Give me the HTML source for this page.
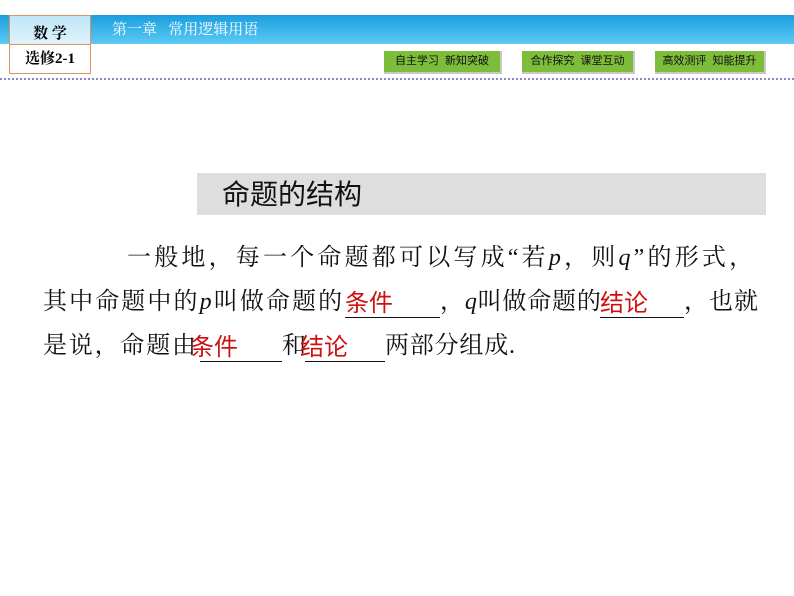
<!DOCTYPE html>
<html><head><meta charset="utf-8"><style>
body{margin:0;width:794px;height:596px;background:#fff;position:relative;overflow:hidden;font-family:"Liberation Serif","Noto Serif CJK SC",serif}
.a{position:absolute;white-space:nowrap}
.bar{left:0;top:15px;width:794px;height:29px;background:linear-gradient(#1a9ede,#5ccaf5)}
.box{left:9px;top:15px;width:80px;height:57px;border:1px solid #e0935a;background:#fff}
.box .t{position:absolute;left:0;top:0;width:80px;height:28px;background:linear-gradient(#bfe6f8,#dff3fc);border-bottom:1px solid #e0935a;text-align:center;font-size:15px;font-weight:bold;line-height:36px}
.box .b{position:absolute;left:0;top:29px;width:80px;height:28px;text-align:center;font-size:15px;font-weight:bold;line-height:28px}
.btn{top:51px;height:21px;background:#7dbd3a;border-right:2px solid #c8c8c8;border-bottom:2px solid #c8c8c8;font-family:"Liberation Sans","Noto Sans CJK SC",sans-serif;font-size:11px;line-height:21px;text-align:center;color:#111}
.dash{left:0;top:78px;width:794px;border-top:2px dotted #8a86c8}
.txt{font-size:24px;color:#111;line-height:30px}
.r{color:#d01010;font-family:"Liberation Sans","Noto Sans CJK SC",sans-serif;font-size:24px}
.u{border-bottom:1px solid #111;height:1px}
i{font-family:"Liberation Serif",serif}
</style></head><body>
<div class="a bar"></div>
<div class="a" style="left:112px;top:19px;font-size:15px;color:#fff;line-height:22px">第一章&nbsp;&nbsp;&nbsp;常用逻辑用语</div>
<div class="a box"><div class="t">数 学</div><div class="b">选修2-1</div></div>
<div class="a btn" style="left:384px;width:116px">自主学习&nbsp;&nbsp;新知突破</div>
<div class="a btn" style="left:522px;width:111px">合作探究&nbsp;&nbsp;课堂互动</div>
<div class="a btn" style="left:655px;width:109px">高效测评&nbsp;&nbsp;知能提升</div>
<div class="a dash"></div>
<div class="a" style="left:197px;top:173px;width:569px;height:42px;background:#dedede"></div>
<div class="a" style="left:222px;top:176px;font-size:28px;line-height:38px;font-family:'Liberation Sans','Noto Sans CJK SC',sans-serif;color:#111">命题的结构</div>
<div class="a txt" style="left:127px;top:243px;letter-spacing:3.2px">一般地，每一个命题都可以写成“若<i>p</i>，则<i>q</i>”的形式，</div>
<div class="a txt" style="left:43px;top:287px;letter-spacing:2.1px">其中命题中的<i>p</i>叫做命题的</div>
<div class="a u" style="left:345px;top:316px;width:95px"></div>
<div class="a r" style="left:345px;top:283px">条件</div>
<div class="a txt" style="left:440px;top:287px;letter-spacing:0.8px">，<i>q</i>叫做命题的</div>
<div class="a u" style="left:600px;top:316px;width:84px"></div>
<div class="a r" style="left:600px;top:283px">结论</div>
<div class="a txt" style="left:684px;top:287px;letter-spacing:1px">，也就</div>
<div class="a txt" style="left:43px;top:331px;letter-spacing:1.8px">是说，命题由</div>
<div class="a u" style="left:200px;top:360px;width:82px"></div>
<div class="a r" style="left:190px;top:327px">条件</div>
<div class="a txt" style="left:282px;top:331px">和</div>
<div class="a u" style="left:305px;top:360px;width:80px"></div>
<div class="a r" style="left:300px;top:327px">结论</div>
<div class="a txt" style="left:385px;top:331px;letter-spacing:0.8px">两部分组成.</div>
</body></html>
